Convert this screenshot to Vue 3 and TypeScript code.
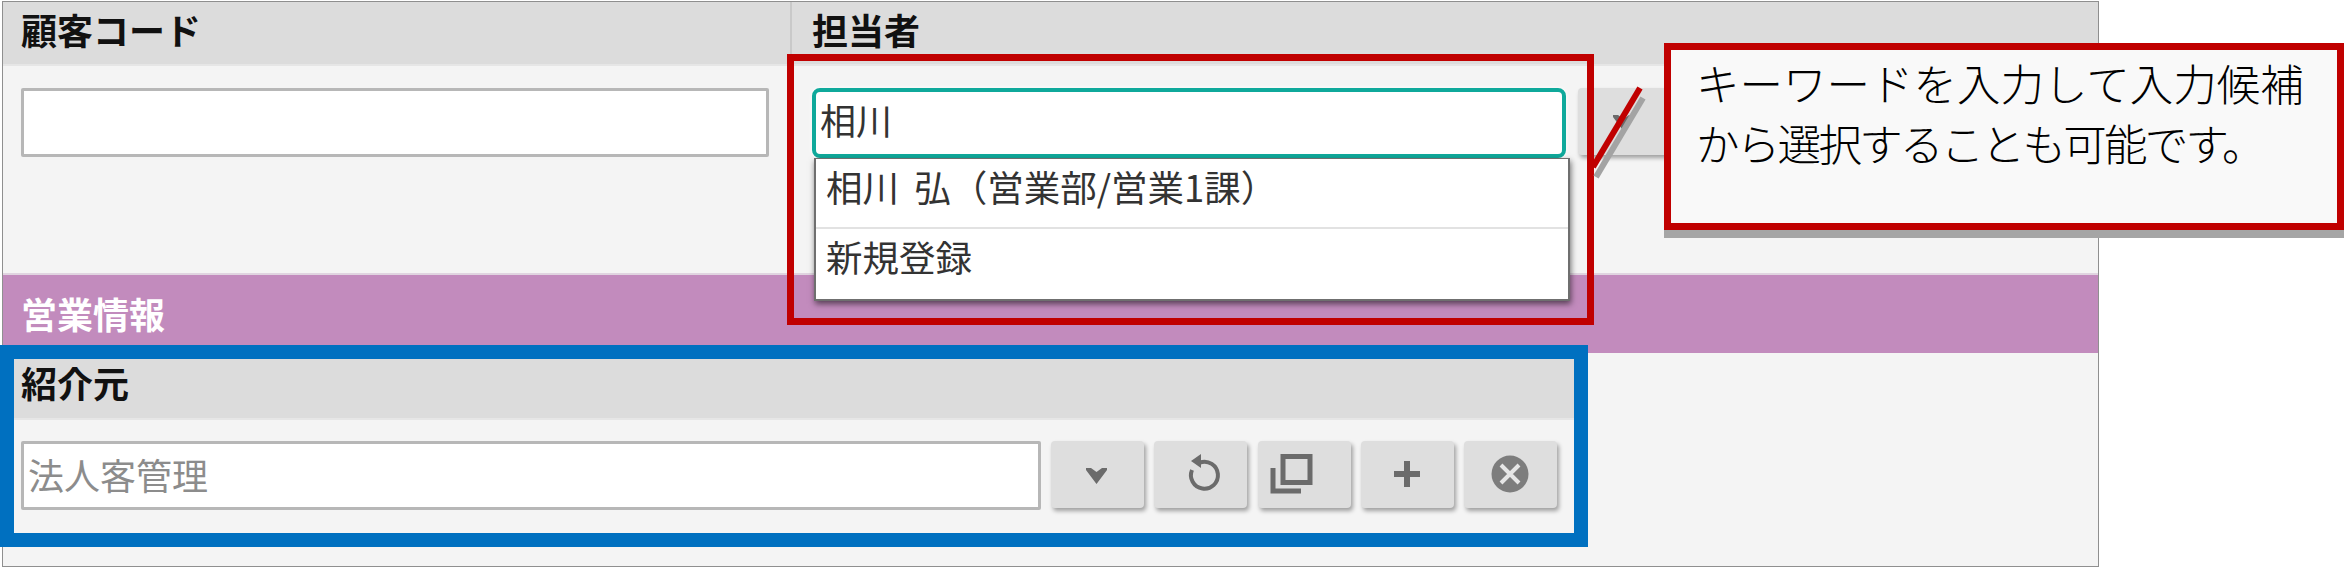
<script setup lang="ts">
type ToolIcon = 'chevron' | 'refresh' | 'copy' | 'plus' | 'close'

const toolIcons: ToolIcon[] = ['chevron', 'refresh', 'copy', 'plus', 'close']
const suggestions = ['相川 弘（営業部/営業1課）', '新規登録']
</script>

<template>
  <div class="stage">
    <div class="panel">
      <div class="top-row">
        <section class="field field--code">
          <div class="field__head">顧客コード</div>
          <div class="field__body">
            <input class="text-input text-input--code" type="text" />
          </div>
        </section>

        <section class="field field--owner">
          <div class="field__head">担当者</div>
          <div class="field__body field__body--owner">
            <input class="text-input text-input--focus" type="text" value="相川" />
            <div class="tools">
              <button v-for="icon in toolIcons" :key="icon" class="tool" type="button">
                <svg class="tool__icon" viewBox="0 0 93 67" width="93" height="67">
                  <use :href="`#icon-${icon}`" />
                </svg>
              </button>
            </div>
            <!-- 入力候補 -->
            <ul class="suggest">
              <li v-for="item in suggestions" :key="item" class="suggest__item">{{ item }}</li>
            </ul>
          </div>
        </section>
      </div>

      <div class="section-bar">営業情報</div>

      <section class="field field--referrer">
        <div class="field__head">紹介元</div>
        <div class="field__body field__body--referrer">
          <input class="text-input text-input--wide" type="text" placeholder="法人客管理" />
          <div class="tools">
            <button v-for="icon in toolIcons" :key="icon" class="tool" type="button">
              <svg class="tool__icon" viewBox="0 0 93 67" width="93" height="67">
                <use :href="`#icon-${icon}`" />
              </svg>
            </button>
          </div>
        </div>
      </section>
    </div>

    <!-- 注釈 -->
    <div class="mark mark--red"></div>
    <div class="mark mark--blue"></div>
    <svg class="leader" viewBox="0 0 60 100" width="60" height="100">
      <line x1="51" y1="18" x2="4" y2="97" stroke="#a3a3a3" stroke-width="6" />
      <line x1="48" y1="8" x2="1" y2="87" stroke="#c00000" stroke-width="6" />
    </svg>
    <div class="callout">
      <div>キーワードを入力して入力候補</div>
      <div class="callout__tight">から選択することも可能です。</div>
    </div>

    <svg class="icon-defs" width="0" height="0" aria-hidden="true">
      <defs>
        <g id="icon-chevron">
          <path d="M35 27 L40 27 L45.500 31 L51 27 L56 27 L56 29 L45.500 43 L35 29 Z" fill="#6b6b6b" />
        </g>
        <g id="icon-refresh">
          <path d="M46 21.500 A13.500 13.500 0 1 1 38 29" fill="none" stroke="#6b6b6b" stroke-width="4" />
          <path d="M47 13 L47 27 L37 20 Z" fill="#6b6b6b" />
        </g>
        <g id="icon-copy">
          <rect x="25" y="15.500" width="27" height="26" fill="none" stroke="#6b6b6b" stroke-width="5" />
          <path d="M15 27 V50 H43" fill="none" stroke="#6b6b6b" stroke-width="5" />
        </g>
        <g id="icon-plus">
          <path d="M46 20 V46 M33 33 H59" fill="none" stroke="#6b6b6b" stroke-width="6" />
        </g>
        <g id="icon-close">
          <circle cx="46" cy="33" r="18.500" fill="#7d7d7d" />
          <path d="M37 24 L55 42 M55 24 L37 42" fill="none" stroke="#e6e6e6" stroke-width="4" />
        </g>
      </defs>
    </svg>
  </div>
</template>

<style>
html,
body {
  margin: 0;
  background: #fff;
}
</style>

<style scoped>
.stage {
  position: relative;
  width: 2344px;
  height: 568px;
  overflow: hidden;
  font-family: 'Noto Sans CJK JP', 'Noto Sans', sans-serif;
}

.panel {
  box-sizing: border-box;
  width: 2097px;
  height: 566px;
  margin: 1px 0 0 2px;
  border: 1px solid #8f8f8f;
  background: #f4f4f4;
}

.top-row {
  display: flex;
  height: 271px;
}

.field--code {
  box-sizing: border-box;
  width: 789px;
  border-right: 2px solid #c9c9c9;
}

.field--owner {
  flex: 1;
}

.field__head {
  box-sizing: border-box;
  height: 64px;
  padding: 4px 0 0 18px;
  border-bottom: 2px solid #e6e6e6;
  background: #dcdcdc;
  color: #111;
  font-size: 36px;
  font-weight: 700;
  line-height: 46px;
}

.field--owner .field__head {
  padding-left: 20px;
}

.field__body {
  padding: 22px 0 0 18px;
}

.field__body--owner {
  position: relative;
  display: flex;
  gap: 12px;
  padding-left: 20px;
}

.field__body--referrer {
  display: flex;
  gap: 10px;
  padding-top: 21px;
}

.text-input {
  display: block;
  box-sizing: border-box;
  height: 69px;
  padding: 0 4px 4px;
  border: 3px solid #b7b7b7;
  border-radius: 2px;
  outline: none;
  background: #fff;
  color: #333;
  font-family: inherit;
  font-size: 36px;
}

.text-input::placeholder {
  color: #8c8c8c;
  opacity: 1;
}

.text-input--code {
  width: 748px;
}

.text-input--focus {
  flex: none;
  width: 754px;
  height: 70px;
  padding-bottom: 8px;
  border: 4px solid #0fa99b;
  border-radius: 8px;
  box-shadow: 0 0 4px #fff;
}

.text-input--wide {
  flex: none;
  width: 1020px;
}

.tools {
  display: flex;
  flex: none;
  gap: 10.25px;
}

.tool {
  display: block;
  box-sizing: border-box;
  width: 93px;
  height: 67px;
  padding: 0;
  border: none;
  border-radius: 4px;
  background: #dedede;
  box-shadow: 2px 3px 4px rgba(0, 0, 0, 0.35);
}

.tool__icon {
  display: block;
  filter: blur(0.6px);
}

.suggest {
  position: absolute;
  top: 92px;
  left: 22px;
  box-sizing: border-box;
  width: 756px;
  height: 143px;
  margin: 0;
  padding: 0;
  border: 2px solid #6f6f6f;
  border-top-width: 1px;
  background: #fff;
  box-shadow: 1px 3px 6px rgba(0, 0, 0, 0.55);
  list-style: none;
}

.suggest__item {
  box-sizing: border-box;
  height: 70px;
  padding: 6px 0 0 10px;
  color: #333;
  font-size: 36.500px;
  line-height: 44px;
  word-spacing: 7px;
}

.suggest__item:first-child {
  border-bottom: 2px solid #e2e2e2;
}

.section-bar {
  box-sizing: border-box;
  height: 80px;
  padding: 15px 0 0 18px;
  border-top: 2px solid #e0d4e0;
  background: #c28bbd;
  color: #fff;
  font-size: 36px;
  font-weight: 700;
  line-height: 46px;
}

.field--referrer .field__head {
  width: 1572px;
  height: 67px;
  padding-top: 6px;
}

.mark {
  position: absolute;
  box-sizing: border-box;
}

.mark--red {
  top: 54px;
  left: 787px;
  width: 807px;
  height: 271px;
  border: 7px solid #c00000;
}

.mark--blue {
  top: 345px;
  left: 0;
  width: 1588px;
  height: 202px;
  border: 14px solid #0070c0;
}

.leader {
  position: absolute;
  top: 80px;
  left: 1592px;
}

.callout {
  position: absolute;
  top: 43px;
  left: 1664px;
  box-sizing: border-box;
  width: 680px;
  height: 187px;
  padding: 3px 0 0 25px;
  border: 7px solid #c00000;
  background: #f9f9f9;
  box-shadow: 0 8px 0 #a5a5a5;
  color: #000;
  font-size: 43.500px;
  font-weight: 300;
  line-height: 60px;
}

.callout__tight {
  letter-spacing: -2.700px;
}

.icon-defs {
  position: absolute;
}
</style>
